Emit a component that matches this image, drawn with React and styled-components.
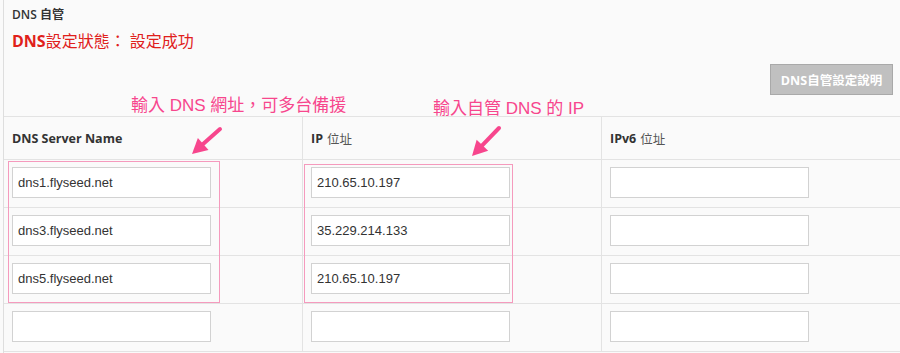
import React from "react";
import styled, { createGlobalStyle } from "styled-components";

const pink = "#f7468d";

const rows = [
  { host: "dns1.flyseed.net", ip: "210.65.10.197" },
  { host: "dns3.flyseed.net", ip: "35.229.214.133" },
  { host: "dns5.flyseed.net", ip: "210.65.10.197" },
  { host: "", ip: "" }
];

function Arrow({ x1, y1, x2, y2 }) {
  const dx = x2 - x1;
  const dy = y2 - y1;
  const len = Math.hypot(dx, dy);
  const ux = dx / len;
  const uy = dy / len;
  const head = 15;
  const half = 8;
  const bx = x2 - ux * head;
  const by = y2 - uy * head;
  const pts = [
    [x2, y2],
    [bx - uy * half, by + ux * half],
    [bx + uy * half, by - ux * half]
  ]
    .map(p => p.join(","))
    .join(" ");
  return (
    <ArrowSvg width="900" height="353">
      <line x1={x1} y1={y1} x2={bx + ux * 2} y2={by + uy * 2} stroke={pink} strokeWidth="4" strokeLinecap="round" />
      <polygon points={pts} fill={pink} />
    </ArrowSvg>
  );
}

function App() {
  return (
    <>
      <GlobalStyle />
      <Panel>
        <Title>DNS 自管</Title>
        <Status>
          <b>DNS</b>設定狀態： 設定成功
        </Status>
        <Toolbar>
          <HelpButton>DNS自管設定說明</HelpButton>
        </Toolbar>
        <Table>
          <HeadCell>
            <b>DNS Server Name</b>
          </HeadCell>
          <HeadCell>
            <b>IP</b> 位址
          </HeadCell>
          <HeadCell last>
            <b>IPv6</b> 位址
          </HeadCell>
          {rows.map((row, i) => (
            <React.Fragment key={i}>
              <Cell>
                <Field defaultValue={row.host} />
              </Cell>
              <Cell>
                <Field defaultValue={row.ip} />
              </Cell>
              <Cell last>
                <Field defaultValue="" />
              </Cell>
            </React.Fragment>
          ))}
        </Table>

        <Highlight left={4} top={161} width={212} height={142} />
        <Highlight left={300} top={164} width={209} height={139} />
        <Note left={127} top={95}>輸入 DNS 網址，可多台備援</Note>
        <Note left={429} top={98}>輸入自管 DNS 的 IP</Note>
        <Arrow x1={216} y1={129} x2={188} y2={154} />
        <Arrow x1={495} y1={128} x2={468} y2={156} />
      </Panel>
    </>
  );
}

const GlobalStyle = createGlobalStyle`
  body {
    margin: 0;
    background: #fafafa;
    font-family: "Open Sans", "Noto Sans CJK TC", sans-serif;
    color: #333;
  }
`;

const Panel = styled.div`
  position: relative;
  margin-left: 3px;
  height: 353px;
  overflow: hidden;
  border-left: 1px solid #dedede;
  padding-top: 7px;
  box-sizing: border-box;
`;

const Title = styled.div`
  padding-left: 8px;
  font-size: 12px;
  line-height: 16px;
  font-weight: 600;
  color: #333;
`;

const Status = styled.div`
  margin-top: 7px;
  padding-left: 8px;
  font-size: 16px;
  line-height: 22px;
  color: #e0201b;
  font-family: "Open Sans", "Noto Sans CJK TC", sans-serif;

  b {
    font-weight: 700;
  }
`;

const Toolbar = styled.div`
  display: flex;
  justify-content: flex-end;
  padding: 12px 7px 21px 0;
`;

const HelpButton = styled.button`
  width: 123px;
  height: 31px;
  background: #c0c0c0;
  border: 1px solid #a9a9a9;
  color: #fff;
  font-family: "Open Sans", "Noto Sans CJK TC", sans-serif;
  font-size: 12.5px;
  font-weight: 700;
  padding: 0;
`;

const Table = styled.div`
  display: grid;
  grid-template-columns: 299px 299px 1fr;
  border-top: 1px solid #e3e3e3;
`;

const HeadCell = styled.div`
  height: 42px;
  display: flex;
  align-items: center;
  gap: 4px;
  padding-left: 8px;
  font-size: 12.5px;
  color: #555;
  border-bottom: 1px solid #e3e3e3;
  border-right: ${p => (p.last ? "none" : "1px solid #e3e3e3")};

  b {
    color: #333;
    font-weight: 700;
  }
`;

const Cell = styled.div`
  height: 48px;
  padding: 7px 0 0 8px;
  box-sizing: border-box;
  border-bottom: 1px solid #e3e3e3;
  border-right: ${p => (p.last ? "none" : "1px solid #e3e3e3")};
`;

const Field = styled.input`
  width: 199px;
  height: 31px;
  box-sizing: border-box;
  border: 1px solid #d2d2d2;
  background: #fff;
  padding: 0 5px;
  font-family: "Liberation Sans", Arial, sans-serif;
  font-size: 13px;
  color: #333;
  outline: none;
`;

const Highlight = styled.div`
  position: absolute;
  left: ${p => p.left}px;
  top: ${p => p.top}px;
  width: ${p => p.width}px;
  height: ${p => p.height}px;
  box-sizing: border-box;
  border: 1.5px solid #f59abd;
  pointer-events: none;
`;

const Note = styled.div`
  position: absolute;
  left: ${p => p.left}px;
  top: ${p => p.top}px;
  font-family: "Liberation Sans", "Noto Sans CJK TC", sans-serif;
  font-size: 17px;
  line-height: 22px;
  color: ${pink};
  white-space: nowrap;
`;

const ArrowSvg = styled.svg`
  position: absolute;
  left: 0;
  top: 0;
  pointer-events: none;
`;

export default App;
